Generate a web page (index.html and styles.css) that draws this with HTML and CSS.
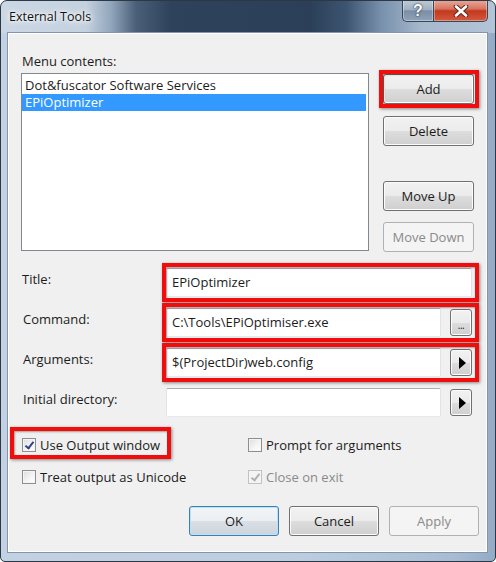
FILE: index.html
```html
<!DOCTYPE html>
<html>
<head>
<meta charset="utf-8">
<title>External Tools</title>
<link rel="stylesheet" href="styles.css">
</head>
<body>
<div class="window">
  <div class="titlebar">
    <span class="title">External Tools</span>
    <div class="caption">
      <span class="cap-btn help">?</span>
      <span class="cap-btn close">
        <svg width="16" height="12" viewBox="0 0 16 12">
          <path d="M3 1.5 L13 10.5 M13 1.5 L3 10.5" stroke="#5a2a22" stroke-width="4.6" stroke-linecap="round" fill="none"/>
          <path d="M3 1.5 L13 10.5 M13 1.5 L3 10.5" stroke="#ffffff" stroke-width="2.6" stroke-linecap="round" fill="none"/>
        </svg>
      </span>
    </div>
  </div>
  <div class="client">
    <div class="top">
      <div class="lbl menu-lbl">Menu contents:</div>
      <div class="listbox">
        <div class="item">Dot&amp;fuscator Software Services</div>
        <div class="item sel">EPiOptimizer</div>
      </div>
      <div class="side">
        <button class="btn hl add">Add</button>
        <button class="btn del">Delete</button>
        <button class="btn up">Move Up</button>
        <button class="btn dis down">Move Down</button>
      </div>
    </div>

    <div class="fields">
      <div class="flbl">Title:</div>
      <div class="fwrap hl"><div class="tb">EPiOptimizer</div></div>

      <div class="flbl">Command:</div>
      <div class="fwrap hl"><div class="tb">C:\Tools\EPiOptimiser.exe</div><button class="sbtn dots">...</button></div>

      <div class="flbl">Arguments:</div>
      <div class="fwrap hl"><div class="tb">$(ProjectDir)web.config</div><button class="sbtn"><span class="tri"></span></button></div>

      <div class="flbl">Initial directory:</div>
      <div class="fwrap"><div class="tb"></div><button class="sbtn"><span class="tri"></span></button></div>
    </div>

    <div class="checks">
      <div class="chk hl hl-chk"><span class="box on"></span><span>Use Output window</span></div>
      <div class="chk"><span class="box"></span><span>Prompt for arguments</span></div>
      <div class="chk"><span class="box"></span><span>Treat output as Unicode</span></div>
      <div class="chk dis"><span class="box on"></span><span>Close on exit</span></div>
    </div>

    <div class="actions">
      <button class="btn def">OK</button>
      <button class="btn">Cancel</button>
      <button class="btn dis">Apply</button>
    </div>
  </div>
</div>
</body>
</html>
```

FILE: styles.css
```css
html, body {
  margin: 0;
  padding: 0;
  background: #ffffff;
}

body {
  font-family: "Open Sans", "Noto Sans", sans-serif;
  font-size: 13px;
  color: #1c1c1c;
}

.window {
  width: 496px;
  height: 562px;
  box-sizing: border-box;
  border: 1px solid #2c3845;
  border-radius: 7px 7px 5px 5px;
  padding: 0 7px 8px 6px;
  display: flex;
  flex-direction: column;
  overflow: hidden;
  background:
    linear-gradient(to right, #cbd7e4 0px, #c4d1df 85px, #92a6bc 110px, #4a5f78 135px, #2e435b 170px, #2b4058 310px, #3d5471 345px, #7890ac 380px, #a5b8cd 420px, #b3c4d7 496px) top left / 100% 32px no-repeat,
    linear-gradient(to right, #c3d2e2 0px, #bccde0 60%, #a7bcd3 92%, #93abc6 100%);
}

/* ---------- title bar ---------- */
.titlebar {
  height: 31px;
  display: flex;
  align-items: flex-start;
}

.title {
  margin-top: 7px;
  padding-left: 2px;
  line-height: 18px;
  font-size: 12.5px;
  color: #111;
  text-shadow: 0 0 6px #fff, 0 0 3px #fff, 0 0 10px rgba(255,255,255,0.9);
}

.caption {
  margin-left: auto;
  margin-top: -1px;
  display: flex;
  height: 22px;
}

.cap-btn {
  box-sizing: border-box;
  height: 22px;
  display: flex;
  align-items: center;
  justify-content: center;
  border: 1px solid #3a4555;
  border-top: none;
  box-shadow: inset 0 0 0 1px rgba(255,255,255,0.35);
}

.help {
  width: 31px;
  border-right: none;
  border-radius: 0 0 0 5px;
  background: linear-gradient(#bfcad6 0%, #a2b1c2 45%, #7b8ea6 52%, #8ea2b9 100%);
  color: #fff;
  font-weight: bold;
  font-size: 16px;
  font-family: "Liberation Sans", "DejaVu Sans", sans-serif;
  text-shadow: 0 0 2px #2c3a4b, 0 0 1px #2c3a4b;
}

.close {
  width: 55px;
  border-radius: 0 0 5px 0;
  background: linear-gradient(#e8ab9c 0%, #d7755f 42%, #c3381d 52%, #d35a3d 100%);
}

/* ---------- client area ---------- */
.client {
  flex: 1;
  background: #f0f0f0;
  border: 1px solid #8394ab;
  box-shadow: inset 0 0 0 1px #ffffff;
  padding: 20px 13px 0 13px;
  display: flex;
  flex-direction: column;
}

.top {
  display: grid;
  grid-template-columns: 1fr 91px;
  column-gap: 14px;
}

.lbl {
  line-height: 16px;
}

.menu-lbl {
  grid-column: 1 / 3;
  margin-left: 1px;
  margin-bottom: 4px;
}

.listbox {
  height: 178px;
  box-sizing: border-box;
  background: #fff;
  border: 1px solid #828790;
  padding: 3px 2px 0 0;
}

.item {
  height: 17px;
  line-height: 17px;
  padding-left: 3px;
  white-space: nowrap;
}

.item.sel {
  background: #3399ff;
  color: #fff;
}

.side {
  display: flex;
  flex-direction: column;
}

/* ---------- buttons ---------- */
.btn {
  box-sizing: border-box;
  width: 91px;
  height: 30px;
  padding: 0;
  font: inherit;
  color: #1c1c1c;
  border: 1px solid #707070;
  border-radius: 3px;
  background: linear-gradient(#f2f2f2 0%, #ebebeb 50%, #dddddd 51%, #cfcfcf 100%);
  box-shadow: inset 0 0 0 1px #fcfcfc;
}

.btn.dis {
  color: #8a8a8a;
  border-color: #adb2b5;
  background: #f4f4f4;
  box-shadow: none;
}

.btn.def {
  border-color: #3c7fb1;
  box-shadow: inset 0 0 0 1px #b9e1f9;
  background: linear-gradient(#f2f5f8 0%, #eaeef2 50%, #d9dfe5 51%, #cdd4db 100%);
}

.add { margin-top: 1px; }
.del { margin-top: 12px; }
.up { margin-top: 35px; }
.down { margin-top: 11px; }

/* ---------- highlight annotations ---------- */
.hl {
  position: relative;
}

.hl::after {
  content: "";
  position: absolute;
  top: -5px;
  bottom: -5px;
  left: -5px;
  right: -6px;
  border: 4px solid #f20d0d;
  box-shadow: 1px 1px 3px rgba(0,0,0,0.45), inset 1px 1px 2px rgba(0,0,0,0.35);
  pointer-events: none;
}

.fwrap.hl::after {
  left: -4px;
  right: -7px;
}

.hl-chk::after {
  top: -2px;
  bottom: 2px;
  left: -12px;
  right: -11px;
}

/* ---------- fields ---------- */
.fields {
  display: grid;
  grid-template-columns: 145px 1fr;
  grid-auto-rows: 29px;
  row-gap: 11px;
  margin-top: 16px;
  margin-right: 2px;
}

.flbl {
  padding-left: 2px;
  margin-top: 3px;
  line-height: 16px;
}

.fields .flbl:first-child {
  padding-left: 1px;
}

.fwrap {
  display: flex;
  align-items: center;
}

.tb {
  flex: 1;
  align-self: stretch;
  box-sizing: border-box;
  background: #fff;
  border: 1px solid #e2e3ea;
  border-top-color: #abadb3;
  border-bottom-color: #e3e9ef;
  border-radius: 2px;
  padding-left: 5px;
  line-height: 27px;
  white-space: nowrap;
  overflow: hidden;
}

.sbtn {
  box-sizing: border-box;
  width: 22px;
  height: 27px;
  margin-left: 9px;
  padding: 0;
  border: 1px solid #707070;
  border-radius: 3px;
  background: linear-gradient(#f2f2f2 0%, #ebebeb 50%, #dddddd 51%, #cfcfcf 100%);
  box-shadow: inset 0 0 0 1px #fcfcfc;
  display: flex;
  align-items: center;
  justify-content: center;
  font: inherit;
  color: #1c1c1c;
}

.sbtn.dots {
  font-size: 10px;
  line-height: 10px;
  padding-top: 4px;
  letter-spacing: -0.5px;
}

.tri {
  width: 0;
  height: 0;
  border-top: 6px solid transparent;
  border-bottom: 6px solid transparent;
  border-left: 7px solid #000;
  margin-left: 2px;
}

/* ---------- checkboxes ---------- */
.checks {
  display: grid;
  grid-template-columns: 226px 1fr;
  grid-auto-rows: 32px;
  margin-top: 12px;
  padding-left: 1px;
}

.chk {
  display: flex;
  align-items: center;
  justify-self: start;
  gap: 4px;
}

.box {
  box-sizing: border-box;
  width: 14px;
  height: 14px;
  border: 1px solid #8e8f8f;
  background: linear-gradient(135deg, #dcdcdc 0%, #f6f6f6 60%, #ffffff 100%);
  box-shadow: inset 0 0 0 1px #f4f4f4;
  position: relative;
}

.box.on::after {
  content: "";
  position: absolute;
  left: 3.5px;
  top: 0.5px;
  width: 3px;
  height: 7px;
  border-right: 2px solid #31418a;
  border-bottom: 2px solid #31418a;
  transform: rotate(38deg);
}

.chk.dis {
  color: #8a8a8a;
}

.chk.dis .box {
  border-color: #c2c2c2;
  background: #f4f4f4;
}

.chk.dis .box.on::after {
  border-color: #b0b0b0;
}

/* ---------- bottom buttons ---------- */
.actions {
  display: flex;
  justify-content: flex-end;
  gap: 10px;
  margin-top: 13px;
  margin-right: -5px;
}

.actions .btn {
  width: 90px;
}
```
